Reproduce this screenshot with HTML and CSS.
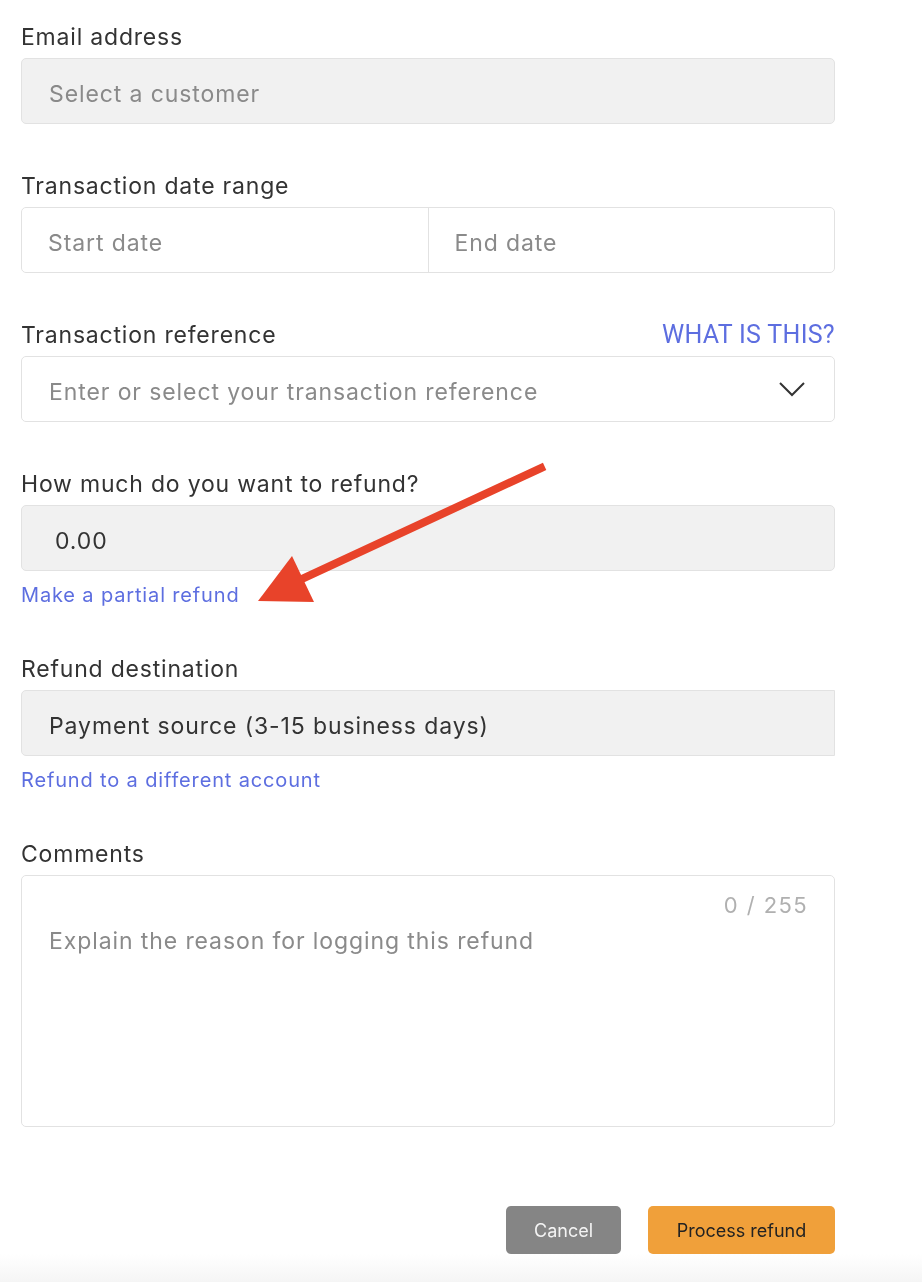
FILE: index.html
```html
<!DOCTYPE html>
<html lang="en">
<head>
  <meta charset="UTF-8">
  <meta name="viewport" content="width=device-width, initial-scale=1.0">
  <title>Log a refund</title>
  <link rel="stylesheet" href="styles.css">
</head>
<body>
<main class="refund-form">
  <div class="field">
    <label class="field-label">Email address</label>
    <div class="input input-filled"><span class="placeholder">Select a customer</span></div>
  </div>

  <div class="field">
    <label class="field-label">Transaction date range</label>
    <div class="input date-range">
      <span class="placeholder">Start date</span>
      <span class="placeholder">End date</span>
    </div>
  </div>

  <div class="field">
    <div class="label-row">
      <label class="field-label">Transaction reference</label>
      <a href="#" class="help-link">WHAT IS THIS?</a>
    </div>
    <div class="input select">
      <span class="placeholder">Enter or select your transaction reference</span>
      <svg class="chevron" width="26" height="16" viewBox="0 0 26 16"><path d="M1 2 L13 14 L25 2" fill="none" stroke="#333" stroke-width="2"/></svg>
    </div>
  </div>

  <div class="field">
    <label class="field-label">How much do you want to refund?</label>
    <div class="input input-filled amount"><span class="value">0.00</span></div>
    <a href="#" class="sub-link">Make a partial refund</a>
  </div>

  <div class="field">
    <label class="field-label">Refund destination</label>
    <div class="input input-filled destination"><span class="value">Payment source (3-15 business days)</span></div>
    <a href="#" class="sub-link">Refund to a different account</a>
  </div>

  <div class="field">
    <label class="field-label">Comments</label>
    <div class="input textarea">
      <span class="counter">0 / 255</span>
      <span class="placeholder">Explain the reason for logging this refund</span>
    </div>
  </div>

  <div class="actions">
    <button class="btn btn-cancel">Cancel</button>
    <button class="btn btn-primary">Process refund</button>
  </div>

  <!-- annotation arrow -->
  <svg class="annotation" width="300" height="155" viewBox="0 0 300 155">
    <line x1="291" y1="13" x2="52" y2="124" stroke="#e8432a" stroke-width="8" stroke-linecap="square"/>
    <polygon points="8,146 42,101 64,147" fill="#e8432a"/>
  </svg>
</main>
<div class="fade"></div>
</body>
</html>
```

FILE: styles.css
```css
:root{
  --text:#333333;
  --muted:#8a8a8a;
  --border:#e2e2e2;
  --filled:#f1f1f1;
  --link:#5d6ee0;
  --radius:5px;
}
*{box-sizing:border-box;margin:0;padding:0}
html,body{height:100%}
body{background:#fff;color:var(--text);font-family:Inter,"Noto Sans",Arial,sans-serif;overflow:hidden}
.refund-form{position:relative;width:814px;margin-left:21px;padding-top:20px}
.field{margin-bottom:45px}
.field-label{display:block;font-size:23px;letter-spacing:.8px;line-height:30px;padding-top:2px;color:var(--text);margin-bottom:6px}
.label-row{display:flex;justify-content:space-between;align-items:flex-start}
.help-link{font-family:Roboto,Arial,sans-serif;font-size:25px;letter-spacing:.3px;line-height:30px;padding-top:2px;color:var(--link);text-decoration:none}
.input{height:66px;border:1px solid var(--border);border-radius:var(--radius);display:flex;align-items:center;padding:6px 27px 0;font-size:23px;letter-spacing:.9px}
.input-filled{background:var(--filled)}
.placeholder{color:var(--muted)}
.value{color:var(--text)}
.select .chevron{margin-top:-6px}
.date-range{padding:0}
.date-range .placeholder{flex:1;height:100%;display:flex;align-items:center;padding:6px 0 0 26px}
.date-range .placeholder + .placeholder{border-left:1px solid var(--border)}
.select{justify-content:space-between}
.chevron{margin-right:2px}
.amount{padding-left:33px}
.destination{border-radius:var(--radius) 0 0 var(--radius)}
.sub-link{display:block;font-size:20px;letter-spacing:.85px;line-height:26px;margin-top:11px;margin-bottom:-37px;color:var(--link);text-decoration:none}
.field:has(.sub-link){margin-bottom:81px}
.textarea{height:252px;flex-direction:column;align-items:stretch;padding:16px 26px 0 27px}
.counter{align-self:flex-end;color:#b0b0b0;font-size:22px;letter-spacing:1.4px;line-height:26px}
.textarea .placeholder{margin-top:8px;line-height:30px}
.actions{display:flex;justify-content:flex-end;gap:27px;margin-top:79px}
.btn{height:48px;border:none;border-radius:5px;font-family:Inter,Arial,sans-serif;font-size:18px;cursor:pointer}
.btn-cancel{width:115px;background:#858585;color:#f4f4f4}
.btn-primary{width:187px;background:#f0a03a;color:#222}
.annotation{position:absolute;left:229px;top:455px}
.fade{position:fixed;left:0;right:0;bottom:0;height:28px;z-index:-1;background:linear-gradient(#fff,#f5f5f5)}
```
